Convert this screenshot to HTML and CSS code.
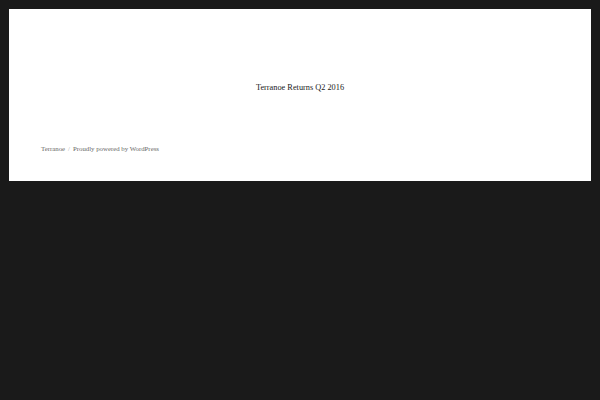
FILE: index.html
```html
<!DOCTYPE html>
<html>
<head>
<meta charset="utf-8">
<link rel="stylesheet" href="styles.css">
</head>
<body>
<div class="site">
  <main class="content">
    <p class="title">Terranoe Returns Q2 2016</p>
  </main>
  <footer class="footer">
    <span class="name">Terranoe</span><span class="sep">/</span><span class="powered">Proudly powered by WordPress</span>
  </footer>
</div>
</body>
</html>
```
FILE: styles.css
```css
html, body { margin: 0; padding: 0; }
body {
  background: #1a1a1a;
  width: 600px;
  height: 400px;
  padding: 9px;
  box-sizing: border-box;
  font-family: "Liberation Serif", "DejaVu Serif", serif;
}
.site {
  background: #fff;
  height: 172px;
  display: flex;
  flex-direction: column;
}
.content {
  height: 130px;
  display: flex;
  justify-content: center;
}
.title {
  margin: 74px 0 0;
  font-size: 8.3px;
  line-height: 10px;
  color: #1a1a1a;
}
.footer {
  padding-left: 32px;
  font-size: 6.8px;
  line-height: 10px;
  color: #686868;
  margin-top: 5px;
}
.sep { margin: 0 3px; color: #aaa; }
```
